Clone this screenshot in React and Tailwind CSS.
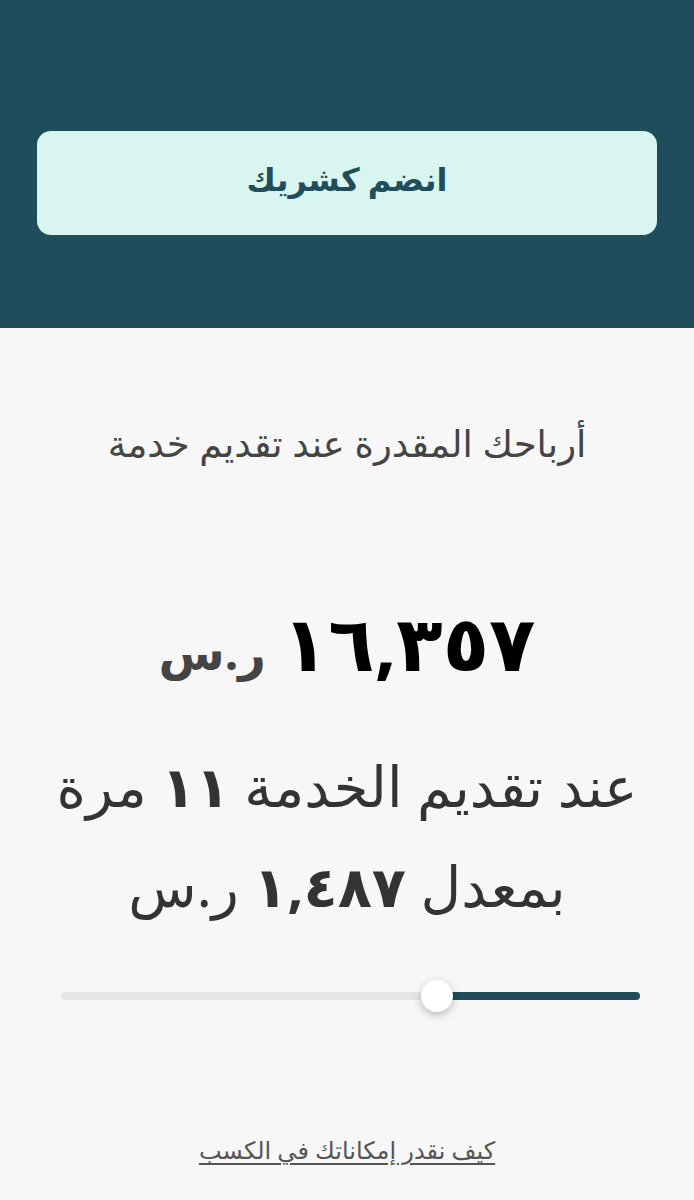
import React, { useState } from 'react'

const App = () => {
    const [value, setValue] = useState(35)

    return (
        <div dir="rtl" className="min-h-[1200px] w-full bg-[#f7f7f7] font-['Noto_Sans','DejaVu_Sans',sans-serif]">
            <div className="bg-[#1f4d5b] px-[37px] pt-[131px] pb-[93px]">
                <button className="flex h-[104px] w-full items-center justify-center rounded-[14px] bg-[#d8f5ef] pb-2 text-[32px] font-bold text-[#1f4d5b]">
                    انضم كشريك
                </button>
            </div>

            <div className="flex flex-col items-center px-[30px] text-center">
                <p className="mt-[90px] text-[37px] leading-[50px] text-[#444]">أرباحك المقدرة عند تقديم خدمة</p>

                <div className="mt-[124px] flex h-[100px] items-center gap-4">
                    <span className="text-[76px] font-bold leading-none text-black">١٦,٣٥٧</span>
                    <span className="mt-5 text-[48px] font-bold leading-none text-[#444]">ر.س</span>
                </div>

                <div className="mt-[43px] text-[56px] leading-[100px] text-[#333]">
                    <p>عند تقديم الخدمة <span className="font-bold">١١</span> مرة</p>
                    <p>بمعدل <span className="font-bold">١,٤٨٧</span> ر.س</p>
                </div>
            </div>

            <div className="mt-[57px] mr-[54px] ml-[61px]">
                <div className="relative h-[8px] w-full rounded-full bg-[#e6e6e6]">
                    <div className="absolute inset-y-0 right-0 rounded-full bg-[#1f4d5b]" style={{ width: `${value}%` }} />
                    <div
                        className="absolute top-1/2 h-[32px] w-[32px] -translate-y-1/2 translate-x-1/2 rounded-full bg-white shadow-[0_3px_8px_rgba(0,0,0,0.25)]"
                        style={{ right: `${value}%` }}
                        onClick={() => setValue(value)}
                    />
                </div>
            </div>

            <div className="mt-[133px] text-center">
                <a href="#" className="text-[24px] leading-[34px] text-[#555] underline underline-offset-4">كيف نقدر إمكاناتك في الكسب</a>
            </div>
        </div>
    )
}

export default App
